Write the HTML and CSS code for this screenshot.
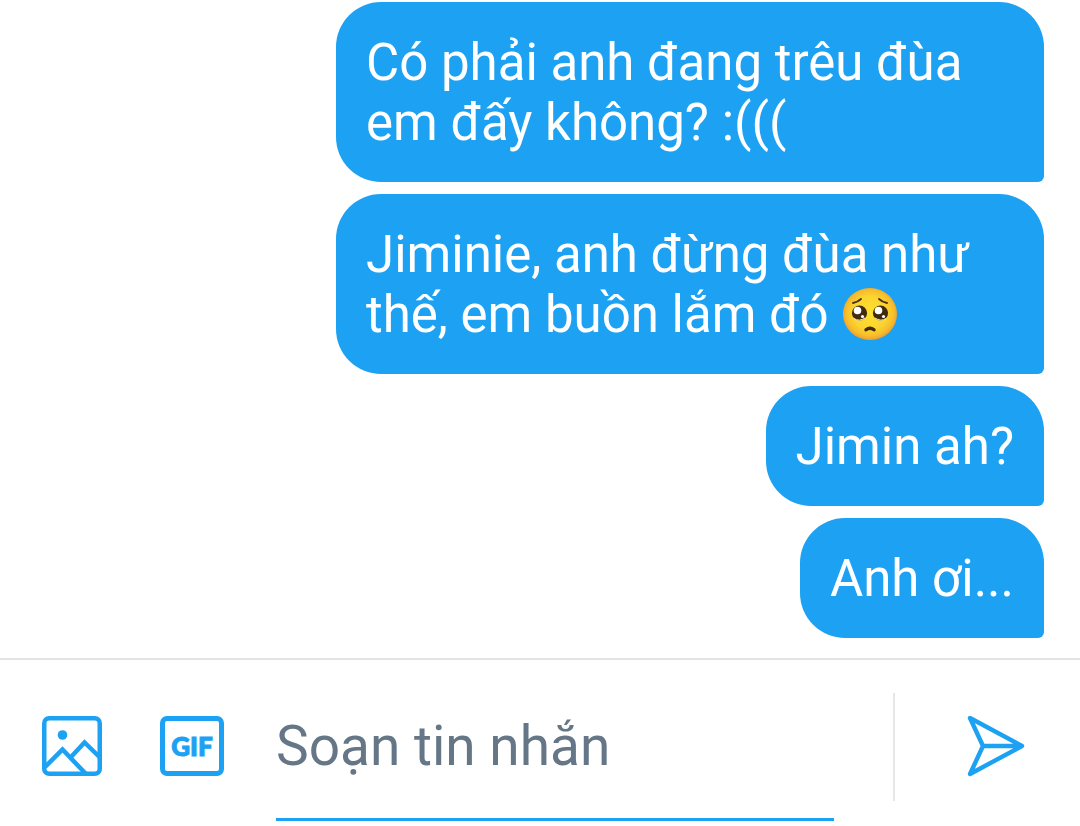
FILE: index.html
```html
<!DOCTYPE html>
<html lang="vi">
<head>
<meta charset="utf-8">
<meta name="viewport" content="width=device-width, initial-scale=1">
<title>Tin nhắn</title>
<link rel="stylesheet" href="styles.css">
</head>
<body>
<main class="chat">
  <section class="messages" aria-label="Tin nhắn">
    <p class="bubble">Có phải anh đang trêu đùa em đấy không? :(((</p>
    <p class="bubble">Jiminie, anh đừng đùa như thế, em buồn lắm đó <svg class="emoji" viewBox="0 0 56 56" role="img" aria-label="Mặt nài nỉ">
      <defs>
        <radialGradient id="face" cx="50%" cy="48%" r="52%">
          <stop offset="0" stop-color="#fde030"/>
          <stop offset="0.6" stop-color="#fbd52f"/>
          <stop offset="0.85" stop-color="#f7bd2b"/>
          <stop offset="1" stop-color="#ee9f2b"/>
        </radialGradient>
      </defs>
      <ellipse cx="28" cy="28" rx="27" ry="26" fill="url(#face)"/>
      <g fill="none" stroke="#4a3020" stroke-width="1.800" stroke-linecap="round">
        <path d="M11 17Q16 16 19 13"/>
        <path d="M45 17Q40 16 37 13"/>
      </g>
      <circle cx="17.500" cy="27" r="7.600" fill="#422b0d"/>
      <circle cx="38.500" cy="27" r="7.600" fill="#422b0d"/>
      <circle cx="15.500" cy="24.500" r="3.800" fill="#fff"/>
      <circle cx="36.500" cy="24.500" r="3.800" fill="#fff"/>
      <circle cx="20.500" cy="30.500" r="1.600" fill="#fff"/>
      <circle cx="41.500" cy="30.500" r="1.600" fill="#fff"/>
      <path d="M12 32.500Q17 36 23 32M33 32Q39 36 44 32.500" fill="none" stroke="#fff3c0" stroke-width="1"/>
      <path d="M24 43.800Q28 40.500 32 43.800" fill="none" stroke="#422b0d" stroke-width="3.400" stroke-linecap="round"/>
    </svg></p>
    <p class="bubble">Jimin ah?</p>
    <p class="bubble">Anh ơi...</p>
  </section>
  <form class="composer">
    <div class="tools">
      <button class="tool" type="button" aria-label="Thêm ảnh">
        <svg width="60" height="60" viewBox="0 0 60 60" fill="none" stroke="currentColor" stroke-width="4.500">
          <rect x="2.250" y="2.250" width="55.500" height="55.500" rx="5"/>
          <path d="M3 51L20.500 33.500L44 58M29 41L42.500 26.500L58 41.500"/>
          <circle cx="20.500" cy="19" r="4.800" fill="currentColor" stroke="none"/>
        </svg>
      </button>
      <button class="tool" type="button" aria-label="Thêm ảnh GIF"><span class="gif">GIF</span></button>
    </div>
    <input class="field" type="text" placeholder="Soạn tin nhắn" aria-label="Soạn tin nhắn">
    <div class="actions">
      <button class="send" type="button" aria-label="Gửi">
        <svg width="58" height="62" viewBox="0 0 58 62" fill="none" stroke="currentColor" stroke-width="4.400" stroke-linejoin="round">
          <path d="M3 3L55 31L3 59L16 31ZM16 31H55"/>
        </svg>
      </button>
    </div>
  </form>
</main>
</body>
</html>
```
FILE: styles.css
```css
* {
  box-sizing: border-box;
}

body {
  margin: 0;
  background: #fff;
  font-family: Roboto, "Noto Sans", sans-serif;
}

button {
  padding: 0;
  border: 0;
  background: none;
  color: #1da1f2;
  font-family: inherit;
  cursor: pointer;
}

.chat {
  display: flex;
  flex-direction: column;
  justify-content: flex-end;
  min-height: 100vh;
}

.messages {
  display: flex;
  flex-direction: column;
  align-items: flex-end;
  gap: 12px;
  padding: 2px 36px 20px;
}

.bubble {
  max-width: 708px;
  margin: 0;
  padding: 31px 30px 29px;
  border-radius: 45px 45px 6px 45px;
  background: #1da1f2;
  color: #fff;
  font-size: 51px;
  line-height: 60px;
}

.emoji {
  width: 58px;
  height: 56px;
  vertical-align: -8px;
  margin: -6px 0 -2px;
}

.composer {
  display: flex;
  align-items: stretch;
  height: 168px;
  border-top: 2px solid #e1e4e6;
}

.tools {
  display: flex;
  align-items: center;
  gap: 58px;
  padding: 6px 52px 0 42px;
}

.tool,
.send {
  display: flex;
}

.gif {
  display: flex;
  align-items: center;
  justify-content: center;
  width: 64px;
  height: 60px;
  border: 5px solid currentColor;
  border-radius: 7px;
  font-family: Lato, sans-serif;
  font-size: 26px;
  font-weight: 900;
  -webkit-text-stroke: 1px currentColor;
}

.field {
  flex: 1;
  min-width: 0;
  margin-bottom: 5px;
  padding: 14px 0 0;
  border: 0;
  border-bottom: 3px solid #1da1f2;
  border-radius: 0;
  outline: 0;
  background: none;
  color: #14171a;
  font-family: inherit;
  font-size: 55px;
}

.field::placeholder {
  color: #657786;
  opacity: 1;
}

.actions {
  display: flex;
  align-items: center;
  margin: 33px 0 25px 59px;
  padding: 0 55px 2px 72px;
  border-left: 2px solid #e6e6e6;
}
```
